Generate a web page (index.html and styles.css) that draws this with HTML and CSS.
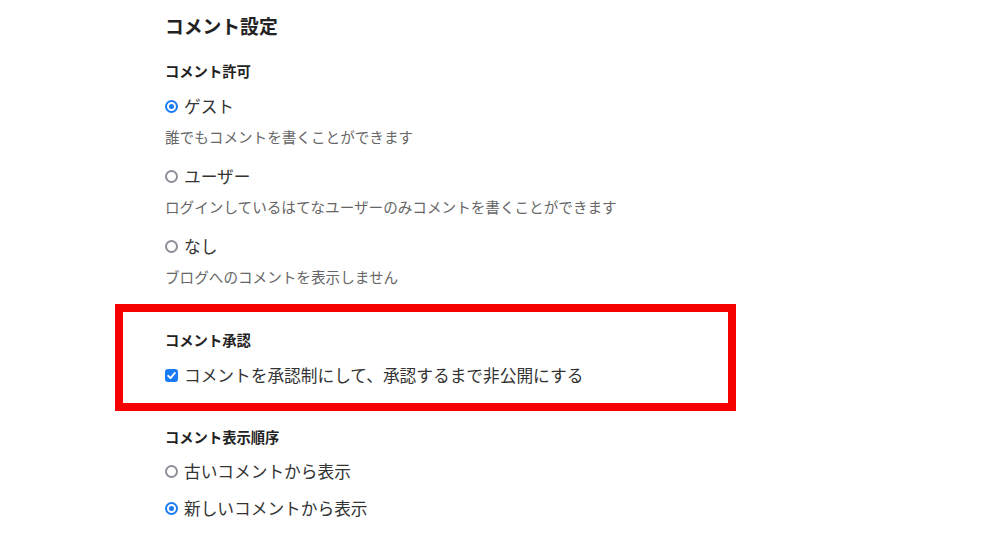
FILE: index.html
```html
<!DOCTYPE html>
<html lang="ja">
<head>
<meta charset="utf-8">
<link rel="stylesheet" href="styles.css">
</head>
<body>
<main class="page">
  <h1 class="title">コメント設定</h1>

  <section class="group">
    <h2 class="heading">コメント許可</h2>
    <div class="option">
      <div class="row"><span class="radio checked"></span><span class="label">ゲスト</span></div>
      <p class="desc">誰でもコメントを書くことができます</p>
    </div>
    <div class="option">
      <div class="row"><span class="radio"></span><span class="label">ユーザー</span></div>
      <p class="desc">ログインしているはてなユーザーのみコメントを書くことができます</p>
    </div>
    <div class="option">
      <div class="row"><span class="radio"></span><span class="label">なし</span></div>
      <p class="desc">ブログへのコメントを表示しません</p>
    </div>
  </section>

  <section class="group highlighted">
    <h2 class="heading">コメント承認</h2>
    <div class="row"><span class="checkbox"><svg viewBox="0 0 13 13" width="13" height="13"><path d="M3.2 6.8 L5.5 9.1 L9.9 3.9" fill="none" stroke="#fff" stroke-width="1.9" stroke-linecap="round" stroke-linejoin="round"/></svg></span><span class="label">コメントを承認制にして、承認するまで非公開にする</span></div>
  </section>

  <section class="group order">
    <h2 class="heading">コメント表示順序</h2>
    <div class="row"><span class="radio"></span><span class="label">古いコメントから表示</span></div>
    <div class="row next"><span class="radio checked"></span><span class="label">新しいコメントから表示</span></div>
  </section>
</main>
</body>
</html>
```

FILE: styles.css
```css
html, body {
  margin: 0;
  padding: 0;
  background: #fff;
}
body {
  font-family: "Noto Sans CJK JP", "Noto Sans", sans-serif;
  color: #333;
}
.page {
  padding: 13px 0 0 165px;
}
.title {
  margin: 0;
  font-size: 18.8px;
  line-height: 26px;
  font-weight: 700;
  color: #222;
}
.group {
  margin-top: 22px;
}
.heading {
  margin: 0 0 13px;
  font-size: 14.3px;
  line-height: 20px;
  font-weight: 700;
  color: #222;
}
.option + .option {
  margin-top: 17px;
}
.row {
  display: flex;
  align-items: center;
  height: 24px;
}
.label {
  font-size: 16.7px;
  line-height: 24px;
  color: #333;
  margin-left: 6px;
}
.desc {
  margin: 9px 0 0;
  font-size: 14.6px;
  line-height: 20px;
  color: #666;
}
.radio {
  width: 13px;
  height: 13px;
  box-sizing: border-box;
  border: 2px solid #8f8d99;
  border-radius: 50%;
  flex: none;
  position: relative;
}
.radio.checked {
  border: 2px solid #1a7cf5;
}
.radio.checked::after {
  content: "";
  position: absolute;
  left: 2px;
  top: 2px;
  width: 5px;
  height: 5px;
  border-radius: 50%;
  background: #1a7cf5;
}
.checkbox {
  width: 13px;
  height: 13px;
  border-radius: 3px;
  background: #1a7cf5;
  flex: none;
  display: flex;
}
.highlighted {
  margin-top: 43px;
  position: relative;
}
.highlighted::after {
  content: "";
  position: absolute;
  left: -50px;
  top: -26px;
  width: 621px;
  height: 107px;
  box-sizing: border-box;
  border: 8px solid #f70000;
  pointer-events: none;
}
.order {
  margin-top: 40px;
}
.order .heading {
  margin-bottom: 12px;
}
.row.next {
  margin-top: 13px;
}
```
